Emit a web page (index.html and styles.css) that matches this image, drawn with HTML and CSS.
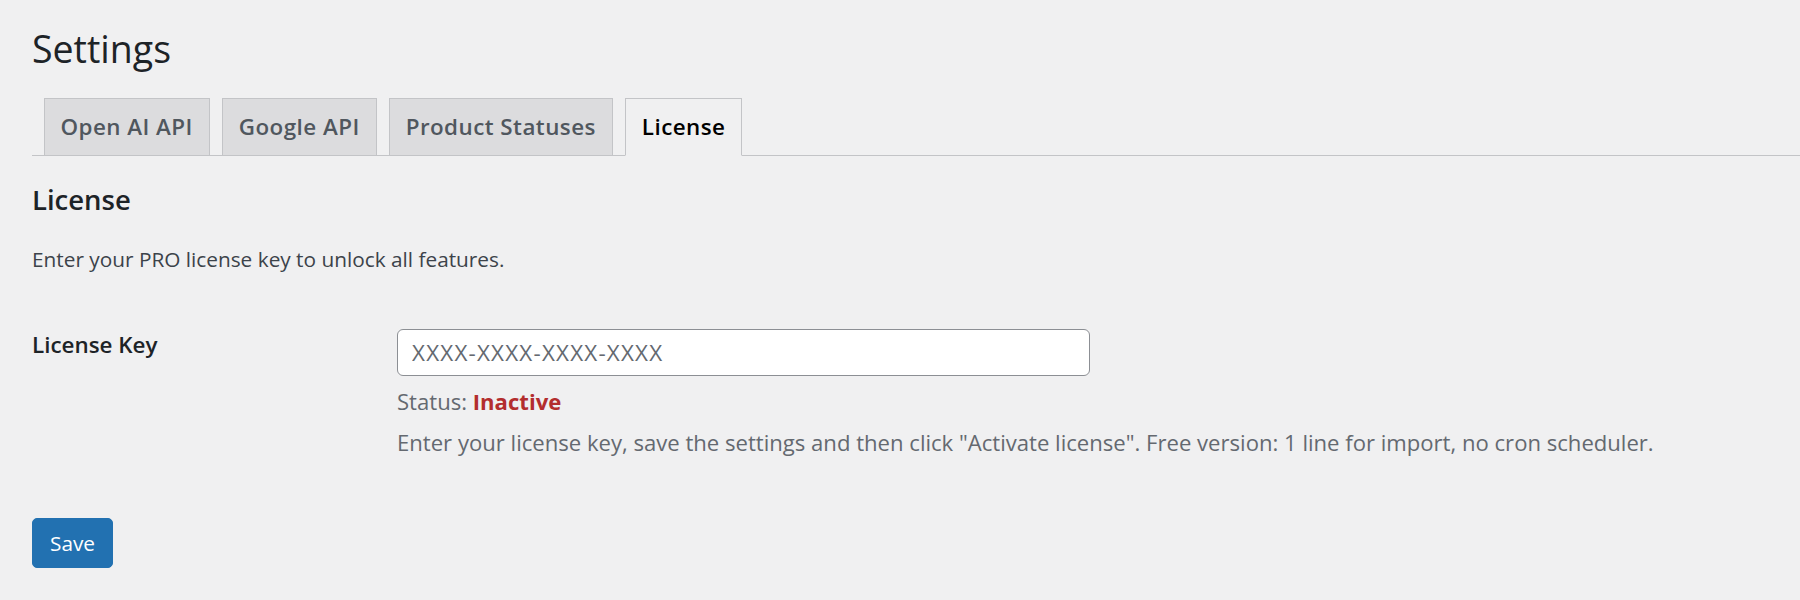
FILE: index.html
```html
<!DOCTYPE html>
<html lang="en">
<head>
<meta charset="utf-8">
<title>Settings</title>
<link rel="stylesheet" href="styles.css">
</head>
<body>
<div class="wrap">
  <h1 class="page-title">Settings</h1>
  <nav class="nav-tabs">
    <a class="nav-tab" href="#">Open AI API</a>
    <a class="nav-tab" href="#">Google API</a>
    <a class="nav-tab" href="#">Product Statuses</a>
    <a class="nav-tab nav-tab-active" href="#">License</a>
  </nav>
  <form class="settings-form">
    <h2 class="section-title">License</h2>
    <p class="intro">Enter your PRO license key to unlock all features.</p>
    <div class="form-row">
      <label class="field-label" for="license-key">License Key</label>
      <div class="field">
        <input class="text-input" id="license-key" type="text" placeholder="XXXX-XXXX-XXXX-XXXX">
        <p class="status">Status: <strong class="status-inactive">Inactive</strong></p>
        <p class="description">Enter your license key, save the settings and then click "Activate license". Free version: 1 line for import, no cron scheduler.</p>
      </div>
    </div>
    <div class="submit-row">
      <button class="btn-primary" type="button">Save</button>
    </div>
  </form>
</div>
</body>
</html>
```

FILE: styles.css
```css
html, body {
  margin: 0;
  padding: 0;
  background: #f0f0f1;
}

body {
  font-family: "Open Sans", "Noto Sans", sans-serif;
  color: #3c434a;
  font-size: 20.8px;
}

.wrap {
  padding: 25px 0 0 32px;
}

.page-title {
  margin: 0;
  font-size: 37.5px;
  font-weight: 400;
  line-height: 48px;
  color: #1d2327;
}

.nav-tabs {
  display: flex;
  align-items: flex-end;
  margin-top: 25px;
  border-bottom: 1px solid #c3c4c7;
  padding-left: 0;
}

.nav-tab {
  display: block;
  margin-left: 11.5px;
  margin-bottom: -1px;
  padding: 9px 16px;
  border: 1px solid #c3c4c7;
  background: #dcdcde;
  color: #50575e;
  font-size: 22.4px;
  font-weight: 600;
  line-height: 38px;
  letter-spacing: 0.45px;
  text-decoration: none;
}

.nav-tab + .nav-tab {
  margin-left: 12px;
}

.nav-tab-active {
  background: #f0f0f1;
  border-bottom-color: #f0f0f1;
  color: #000;
}

.settings-form {
  margin: 0;
}

.section-title {
  margin: 26px 0 0;
  font-size: 27.5px;
  font-weight: 600;
  line-height: 36px;
  color: #1d2327;
}

.intro {
  margin: 25px 0 0;
  line-height: 32px;
}

.form-row {
  display: flex;
  margin-top: 54px;
}

.field-label {
  flex: 0 0 365px;
  font-size: 22.4px;
  font-weight: 600;
  line-height: 32px;
  color: #1d2327;
}

.field {
  display: flex;
  flex-direction: column;
}

.text-input {
  box-sizing: border-box;
  width: 693px;
  height: 47px;
  margin: 0;
  padding: 0 14px;
  border: 1px solid #8c8f94;
  border-radius: 6px;
  background: #fff;
  font-family: inherit;
  font-size: 22.4px;
  letter-spacing: 1.2px;
  color: #2c3338;
}

.text-input::placeholder {
  color: #646970;
}

.status {
  margin: 9px 0 0;
  font-size: 22.1px;
  line-height: 32px;
  color: #646970;
}

.status-inactive {
  color: #b32d2e;
  font-weight: 700;
}

.description {
  margin: 9px 0 0;
  font-size: 22.1px;
  line-height: 32px;
  color: #646970;
}

.submit-row {
  margin-top: 60px;
}

.btn-primary {
  height: 50px;
  margin: 0;
  padding: 0 17px;
  border: 1px solid #2271b1;
  border-radius: 5px;
  background: #2271b1;
  color: #fff;
  font-family: inherit;
  font-size: 20.8px;
  line-height: 46px;
  cursor: pointer;
}
```
